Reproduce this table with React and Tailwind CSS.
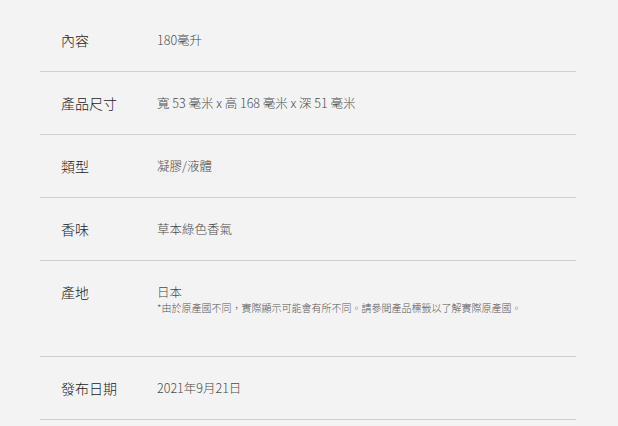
const specs = [
  { label: '內容', value: '180毫升' },
  { label: '產品尺寸', value: '寬 53 毫米 x 高 168 毫米 x 深 51 毫米' },
  { label: '類型', value: '凝膠/液體' },
  { label: '香味', value: '草本綠色香氣' },
  {
    label: '產地',
    value: '日本',
    note: '*由於原產國不同，實際顯示可能會有所不同。請參閱產品標籤以了解實際原產國。',
  },
  { label: '發布日期', value: '2021年9月21日' },
];

export default function App() {
  return (
    <div
      className="min-h-screen bg-[#f3f3f3] pt-[9px] pl-10 pr-[42px]"
      style={{ fontFamily: '"Noto Sans CJK TC", "Noto Sans", sans-serif' }}
    >
      {specs.map((row, i) => (
        <div key={i} className="flex border-b border-[#cfcfcf] py-[21px]">
          <div className="w-[117px] shrink-0 pl-[21px] text-[14px] font-light leading-5 text-[#222]">
            {row.label}
          </div>
          <div>
            <p className="text-[12.5px] font-light leading-5 text-[#4a4a4a]">{row.value}</p>
            {row.note && (
              <p className="pb-[21px] text-[10px] font-light leading-3 text-[#555]">{row.note}</p>
            )}
          </div>
        </div>
      ))}
    </div>
  );
}
